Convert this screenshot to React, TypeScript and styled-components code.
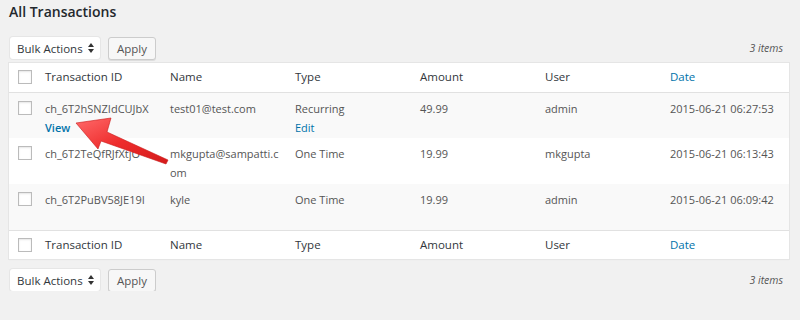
import React from 'react';
import styled, { createGlobalStyle } from 'styled-components';

const GlobalStyle = createGlobalStyle`
	body {
		margin: 0;
		background: #f1f1f1;
		font-family: 'Open Sans', 'Noto Sans', sans-serif;
		font-size: 11px;
		color: #555;
	}
`;

interface Transaction {
	id: string,
	name: string,
	type: string,
	amount: string,
	user: string,
	date: string,
	actions?: boolean
}

const transactions: Transaction[] = [
	{ actions: true, amount: '49.99', date: '2015-06-21 06:27:53', id: 'ch_6T2hSNZIdCUJbX', name: 'test01@test.com', type: 'Recurring', user: 'admin' },
	{ amount: '19.99', date: '2015-06-21 06:13:43', id: 'ch_6T2TeQfRJfXtjO', name: 'mkgupta@sampatti.com', type: 'One Time', user: 'mkgupta' },
	{ amount: '19.99', date: '2015-06-21 06:09:42', id: 'ch_6T2PuBV58JE19I', name: 'kyle', type: 'One Time', user: 'admin' }
];

const columns = ['Transaction ID', 'Name', 'Type', 'Amount', 'User'];

const Wrap = styled.div`
	position: relative;
	padding: 0 11px 0 9px;
`;

const Title = styled.h2`
	margin: 0;
	padding: 2px 0 0;
	font-size: 14px;
	font-weight: 600;
	line-height: 20px;
	color: #23282d;
`;

const Nav = styled.div<{ bottom?: boolean }>`
	display: flex;
	align-items: center;
	gap: 8px;
	height: 22px;
	margin: ${p => (p.bottom ? '10px 0 0' : '15px 0 4px')};
	padding-left: 1px;
`;

const Select = styled.div`
	display: flex;
	align-items: center;
	justify-content: space-between;
	box-sizing: border-box;
	width: 90px;
	height: 22px;
	padding: 0 6px 0 7px;
	background: #fff;
	border-radius: 3px;
	box-shadow: 0 0 0 1px #e6e6e6;
	color: #32373c;
	font-size: 11.5px;
`;

const Button = styled.div`
	box-sizing: border-box;
	height: 23px;
	padding: 0 8px;
	line-height: 21px;
	background: #f7f7f7;
	border: 1px solid #ccc;
	border-radius: 3px;
	box-shadow: 0 1px 0 #ddd;
	color: #555;
	font-size: 11.5px;
`;

const Count = styled.span`
	margin-left: auto;
	margin-right: 6px;
	font-style: italic;
	font-size: 10.5px;
	color: #555;
`;

const Table = styled.table`
	width: 100%;
	border-collapse: collapse;
	background: #fff;
	box-shadow: 0 1px 1px rgba(0, 0, 0, 0.05);
	outline: 1px solid #e5e5e5;
	table-layout: fixed;
`;

const HeadCell = styled.th<{ link?: boolean }>`
	box-sizing: border-box;
	width: ${p => (p.link ? 'auto' : '125px')};
	height: 29px;
	padding: 0 10px 1px 0;
	text-align: left;
	font-weight: 400;
	font-size: 11.5px;
	color: ${p => (p.link ? '#0073aa' : '#32373c')};
`;

const HeadRow = styled.tr<{ foot?: boolean }>`
	${p => (p.foot ? 'border-top: 1px solid #e1e1e1;' : 'border-bottom: 1px solid #e1e1e1;')}
`;

const Row = styled.tr<{ alt?: boolean }>`
	background: ${p => (p.alt ? '#f9f9f9' : '#fff')};
	height: 46px;
`;

const Cell = styled.td`
	padding: 6px 14px 0 0;
	vertical-align: top;
	line-height: 19px;
	word-break: break-all;
`;

const CheckCell = styled.td`
	padding: 8px 0 0 9px;
	vertical-align: top;
`;

const CheckHead = styled.th`
	box-sizing: border-box;
	width: 36px;
	padding: 0 0 0 9px;
`;

const Box = styled.span`
	display: block;
	box-sizing: border-box;
	width: 14px;
	height: 14px;
	background: #fff;
	border: 1px solid #bbb;
	box-shadow: inset 0 1px 2px rgba(0, 0, 0, 0.1);
`;

const Action = styled.div`
	color: #0073aa;
	font-weight: 600;
`;

const EditLink = styled.div`
	color: #0073aa;
`;

const Arrow = styled.svg`
	position: absolute;
	left: 0;
	top: 0;
	pointer-events: none;
`;

const Toolbar = ({ bottom }: { bottom?: boolean }) => (
	<Nav bottom={bottom}>
		<Select>
			Bulk Actions
			<svg width='6' height='10' viewBox='0 0 6 10'>
				<path d='M3 0L6 4H0Z M3 10L0 6H6Z' fill='#333' />
			</svg>
		</Select>
		<Button>Apply</Button>
		<Count>3 items</Count>
	</Nav>
);

const Header = ({ foot }: { foot?: boolean }) => (
	<HeadRow foot={foot}>
		<CheckHead><Box /></CheckHead>
		{columns.map(c => <HeadCell key={c}>{c}</HeadCell>)}
		<HeadCell link>Date</HeadCell>
	</HeadRow>
);

const App = () => (
	<>
		<GlobalStyle />
		<Wrap>
			<Title>All Transactions</Title>
			<Toolbar />
			<Table>
				<thead><Header /></thead>
				<tbody>
					{transactions.map((t, i) => (
						<Row key={t.id} alt={i % 2 === 0}>
							<CheckCell><Box /></CheckCell>
							<Cell>
								{t.id}
								{t.actions && <Action>View</Action>}
							</Cell>
							<Cell>{t.name}</Cell>
							<Cell>
								{t.type}
								{t.actions && <EditLink>Edit</EditLink>}
							</Cell>
							<Cell>{t.amount}</Cell>
							<Cell>{t.user}</Cell>
							<Cell>{t.date}</Cell>
						</Row>
					))}
				</tbody>
				<tfoot><Header foot /></tfoot>
			</Table>
			<Toolbar bottom />
			<Arrow width='800' height='320'>
				<defs>
					<linearGradient id='arrowFill' x1='0' y1='0' x2='1' y2='1'>
						<stop offset='0' stopColor='#ff6a6a' />
						<stop offset='0.5' stopColor='#ee2c2c' />
						<stop offset='1' stopColor='#d41a1a' />
					</linearGradient>
				</defs>
				<path
					d='M76 123 L111 118 L107 132 L168 160 L166 164 L101 141 L98 149 Z'
					fill='url(#arrowFill)'
					stroke='#c81818'
					strokeWidth='0.6'
					strokeLinejoin='round'
				/>
			</Arrow>
		</Wrap>
	</>
);

export default App;
